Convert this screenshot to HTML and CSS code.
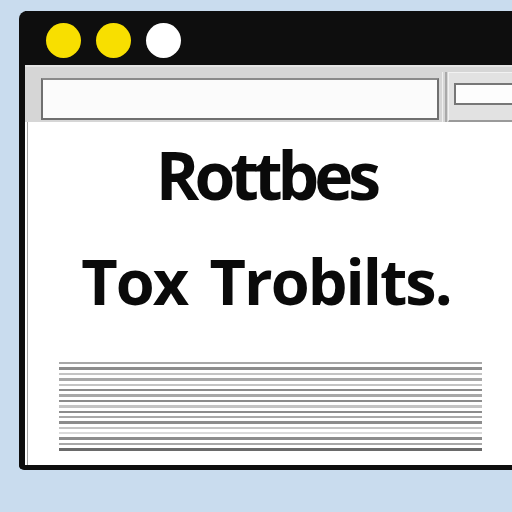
FILE: index.html
```html
<!DOCTYPE html>
<html>
<head>
<meta charset="utf-8">
<link rel="stylesheet" href="styles.css">
</head>
<body>
<div class="window">
  <div class="titlebar">
    <span class="dot yellow"></span>
    <span class="dot yellow"></span>
    <span class="dot white"></span>
  </div>
  <div class="toolbar">
    <div class="address"></div>
    <div class="sep"></div>
    <div class="panel"><div class="panel-box"></div></div>
  </div>
  <div class="content">
    <h1 class="title">Rottbes</h1>
    <h2 class="subtitle">Tox Trobilts.</h2>
    <div class="lines">
      <div class="line mid"></div>
      <div class="line dark"></div>
      <div class="line light"></div>
      <div class="line mid"></div>
      <div class="line light"></div>
      <div class="line dark"></div>
      <div class="line mid"></div>
      <div class="line dark"></div>
      <div class="line light"></div>
      <div class="line dark"></div>
      <div class="line mid"></div>
      <div class="line dark"></div>
      <div class="line light"></div>
      <div class="line faint"></div>
      <div class="line dark"></div>
      <div class="line mid"></div>
      <div class="line darker"></div>
    </div>
  </div>
</div>
</body>
</html>
```
FILE: styles.css
```css
html, body {
  margin: 0;
  padding: 0;
  width: 512px;
  height: 512px;
  overflow: hidden;
  background: #c9dcee;
}

.window {
  margin: 11px 0 0 19px;
  width: 487px;
  background: #ffffff;
  border-left: 6px solid #0e0e0e;
  border-bottom: 5px solid #0e0e0e;
  border-top-left-radius: 8px;
  border-bottom-left-radius: 5px;
}

.titlebar {
  height: 54px;
  background: #0e0e0e;
  display: flex;
  align-items: flex-start;
  gap: 15px;
  padding: 12px 0 0 21px;
  box-sizing: border-box;
}

.dot {
  width: 35px;
  height: 35px;
  border-radius: 50%;
  display: block;
}
.dot.yellow { background: #f8df00; }
.dot.white { background: #ffffff; }

.toolbar {
  height: 57px;
  background: #d6d6d6;
  border-top: 2px solid #e4e4e4;
  box-sizing: border-box;
  display: flex;
  align-items: flex-start;
}

.address {
  flex: none;
  margin: 11px 0 0 16px;
  width: 398px;
  height: 42px;
  box-sizing: border-box;
  background: #fbfbfb;
  border: 2px solid #6f6f6f;
  border-top-color: #8a8a8a;
}

.sep {
  flex: none;
  align-self: stretch;
  margin: 5px 0 0 3px;
  width: 2px;
  border-left: 1px solid #f0f0f0;
  border-right: 2px solid #a9a9a9;
}

.panel {
  margin: 5px 0 0 1px;
  flex: 1;
  min-width: 0;
  height: 50px;
  box-sizing: border-box;
  background: #e2e2e2;
  border-top: 1px solid #f2f2f2;
  border-left: 1px solid #f2f2f2;
  border-bottom: 2px solid #9a9a9a;
  padding: 10px 0 0 5px;
}

.panel-box {
  width: 100px;
  height: 22px;
  box-sizing: border-box;
  background: #fdfdfd;
  border: 2px solid #777777;
}

.content {
  height: 343px;
  margin-left: 2px;
  border-left: 1px solid #a4a4a4;
  padding-right: 8px;
  overflow: hidden;
  font-family: "Open Sans", "DejaVu Sans", sans-serif;
  color: #0a0a0a;
  text-align: center;
}

.title {
  margin: 19px 0 0;
  font-size: 66px;
  line-height: 66px;
  font-weight: 700;
  letter-spacing: -5px;
}

.subtitle {
  margin: 42px 0 0;
  font-size: 63px;
  line-height: 63px;
  font-weight: 700;
  letter-spacing: -2px;
  word-spacing: 8px;
}

.lines {
  margin: 50px 0 0 31px;
  width: 423px;
  display: flex;
  flex-direction: column;
  gap: 3px;
}

.line { height: 2.4px; }
.line.darker { background: #6a6a6a; }
.line.dark { background: #8c8c8c; }
.line.mid { background: #a8a8a8; }
.line.light { background: #c4c4c4; }
.line.faint { background: #dadada; }
```
